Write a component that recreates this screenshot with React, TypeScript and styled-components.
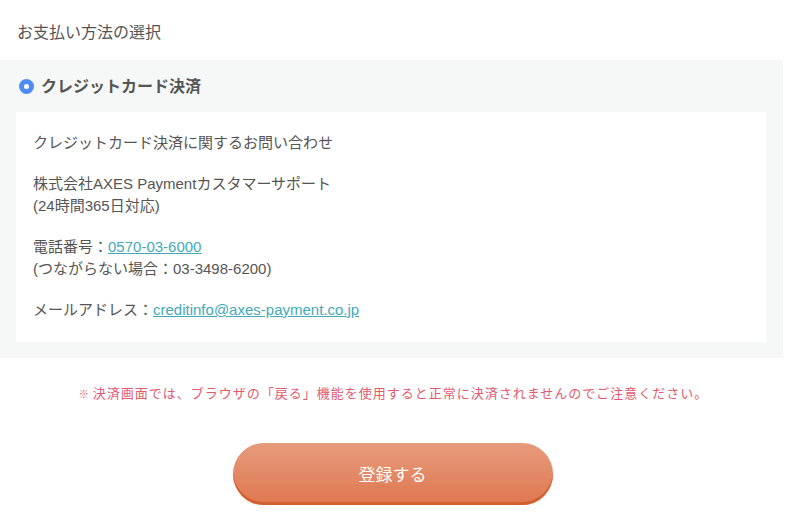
import styled, { createGlobalStyle } from "styled-components";

const GlobalStyle = createGlobalStyle`
	html, body {
		margin: 0;
		padding: 0;
		background: #fff;
	}
	body {
		font-family: "Liberation Sans", "Noto Sans CJK JP", sans-serif;
		color: #555;
	}
`;

export default function App() {
	return (
		<Page>
			<GlobalStyle />
			<Title>お支払い方法の選択</Title>

			<Panel>
				<MethodLabel>
					<Radio />
					<MethodName>クレジットカード決済</MethodName>
				</MethodLabel>

				<InfoBox>
					<Para>クレジットカード決済に関するお問い合わせ</Para>
					<Para>
						株式会社AXES Paymentカスタマーサポート
						<br />
						(24時間365日対応)
					</Para>
					<Para>
						電話番号：<Link href="#">0570-03-6000</Link>
						<br />
						(つながらない場合：03-3498-6200)
					</Para>
					<Para>
						メールアドレス：
						<Link href="#">creditinfo@axes-payment.co.jp</Link>
					</Para>
				</InfoBox>
			</Panel>

			<Notice>
				<Mark>※</Mark>決済画面では、ブラウザの「戻る」機能を使用すると正常に決済されませんのでご注意ください。
			</Notice>

			<ButtonRow>
				<SubmitButton type="button">登録する</SubmitButton>
			</ButtonRow>
		</Page>
	);
}

const Page = styled.div`
	width: 783px;
`;

const Title = styled.h2`
	margin: 0;
	padding: 22px 17px 0;
	height: 38px;
	font-size: 16px;
	font-weight: normal;
	line-height: 22px;
	color: #555;
`;

const Panel = styled.section`
	background: #f6f8f8;
	padding: 12px 17px 16px 16px;
`;

const MethodLabel = styled.label`
	display: flex;
	align-items: center;
	gap: 7px;
	height: 26px;
	padding-left: 3px;
	margin-bottom: 14px;
`;

const Radio = styled.span`
	width: 15px;
	height: 15px;
	border-radius: 50%;
	background: #4d8cf5;
	display: flex;
	align-items: center;
	justify-content: center;
	margin-top: 3px;

	&::after {
		content: "";
		width: 5px;
		height: 5px;
		border-radius: 50%;
		background: #fff;
	}
`;

const MethodName = styled.span`
	font-size: 16px;
	font-weight: bold;
	color: #555;
`;

const InfoBox = styled.div`
	background: #fff;
	padding: 20px 17px 21px;
	display: flex;
	flex-direction: column;
	gap: 19px;
`;

const Para = styled.p`
	margin: 0;
	font-size: 15px;
	line-height: 22px;
	color: #555;
`;

const Link = styled.a`
	color: #45a9b8;
	text-decoration: underline;
`;

const Notice = styled.p`
	margin: 26px 0 0;
	text-align: center;
	font-size: 13px;
	letter-spacing: 1px;
	line-height: 20px;
	color: #e35a6e;
	padding-left: 4px;
`;

const Mark = styled.span`
	font-size: 10px;
	margin-right: 3px;
`;

const ButtonRow = styled.div`
	display: flex;
	justify-content: center;
	padding: 38px 0 0 2px;
`;

const SubmitButton = styled.button`
	width: 320px;
	height: 62px;
	border: none;
	border-radius: 31px;
	background: linear-gradient(#e69b7c, #df774f);
	box-shadow: inset 0 -3px 0 #d2602f, 0 1px 2px rgba(0, 0, 0, 0.1);
	color: #fff;
	font-family: "Liberation Sans", "Noto Sans CJK JP", sans-serif;
	font-size: 17px;
	padding-bottom: 2px;
	cursor: pointer;
`;
